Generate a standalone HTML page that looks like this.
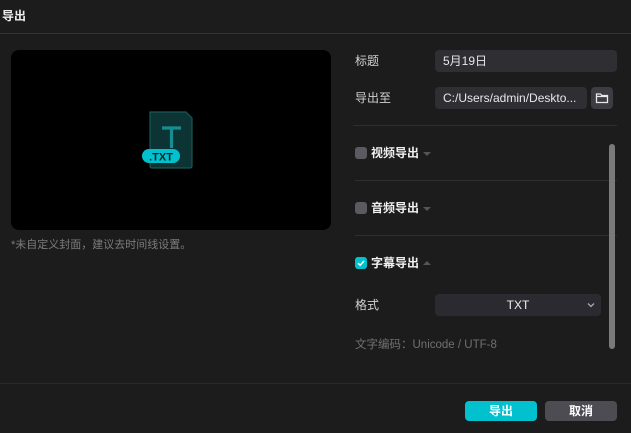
<!DOCTYPE html>
<html><head><meta charset="utf-8"><style>
*{margin:0;padding:0;box-sizing:border-box}
body{width:631px;height:433px;background:#1c1c1c;font-family:"Liberation Sans","Noto Sans CJK SC",sans-serif;color:#e6e6e6;position:relative;overflow:hidden;font-size:12px}
.a{position:absolute}
.line{position:absolute;height:1px;background:#2e2e2e}
.lbl{position:absolute;font-size:12px;color:#d0d0d0;line-height:16px}
.inp{position:absolute;background:#2e2e33;border-radius:4px;font-size:12px;color:#e8e8e8;line-height:22px;padding-left:8px}
.cb{position:absolute;width:12px;height:12px;border-radius:3px;background:#5a5a60}
.sec{position:absolute;font-size:12px;font-weight:bold;color:#f0f0f0;line-height:16px}
.tri{position:absolute;width:0;height:0;border-left:4px solid transparent;border-right:4px solid transparent}
</style></head><body>
<div class="a" style="left:2px;top:8px;font-size:12px;font-weight:bold;color:#eee;line-height:16px">导出</div>
<div class="line" style="left:0;top:33px;width:631px;background:#333"></div>
<div class="a" style="left:11px;top:50px;width:320px;height:180px;background:#000;border-radius:8px"></div>
<svg class="a" style="left:140px;top:108px" width="56" height="64" viewBox="0 0 56 64">
<path d="M10 4 H46 L52 10 V58 Q52 60 50 60 H12 Q10 60 10 58 Z" fill="#0c3434" stroke="#1c5656" stroke-width="1.2"/>
<path d="M22 20 H41 M31.5 20 V40" stroke="#168d93" stroke-width="3.2" fill="none"/>
<rect x="2" y="41" width="38" height="14" rx="7" fill="#00c1cd"/>
<text x="21" y="52.5" font-family="Liberation Sans" font-weight="bold" font-size="11" fill="#062626" text-anchor="middle">.TXT</text>
</svg>
<div class="a" style="left:11px;top:238px;font-size:11px;color:#7c7c7c;line-height:14px">*未自定义封面，建议去时间线设置。</div>

<div class="lbl" style="left:355px;top:53px">标题</div>
<div class="inp" style="left:435px;top:50px;width:182px;height:22px">5月19日</div>
<div class="lbl" style="left:355px;top:90px">导出至</div>
<div class="inp" style="left:435px;top:87px;width:152px;height:22px">C:/Users/admin/Deskto...</div>
<div class="a" style="left:591px;top:87px;width:22px;height:22px;background:#3c3c42;border-radius:4px"></div>
<svg class="a" style="left:595px;top:91px" width="14" height="14" viewBox="0 0 14 14"><path d="M1.5 3 H5.5 L6.8 4.5 H12.5 V11.5 H1.5 Z M1.5 5.5 H12.5" fill="none" stroke="#e8e8e8" stroke-width="1.3"/></svg>
<div class="line" style="left:353px;top:125px;width:264px"></div>

<div class="cb" style="left:355px;top:147px"></div>
<div class="sec" style="left:371px;top:145px">视频导出</div>
<div class="tri" style="left:423px;top:152px;border-top:4px solid #555"></div>
<div class="line" style="left:355px;top:180px;width:262px"></div>
<div class="cb" style="left:355px;top:202px"></div>
<div class="sec" style="left:371px;top:200px">音频导出</div>
<div class="tri" style="left:423px;top:207px;border-top:4px solid #555"></div>
<div class="line" style="left:355px;top:235px;width:262px"></div>
<div class="cb" style="left:355px;top:257px;background:#00c1cd"></div>
<svg class="a" style="left:355px;top:257px" width="12" height="12" viewBox="0 0 12 12"><path d="M3 6.2 L5.2 8.2 L9 4" fill="none" stroke="#fff" stroke-width="1.5"/></svg>
<div class="sec" style="left:371px;top:255px">字幕导出</div>
<div class="tri" style="left:423px;top:261px;border-bottom:4px solid #555"></div>

<div class="lbl" style="left:355px;top:297px">格式</div>
<div class="a" style="left:435px;top:294px;width:166px;height:22px;background:#2a2a30;border-radius:4px;text-align:center;line-height:22px;font-size:12px;color:#eee">TXT</div>
<svg class="a" style="left:587px;top:302px" width="8" height="6" viewBox="0 0 8 6"><path d="M1 1.5 L4 4.5 L7 1.5" fill="none" stroke="#aaa" stroke-width="1.3"/></svg>
<div class="a" style="left:355px;top:337px;font-size:11.5px;color:#707070;line-height:16px">文字编码：Unicode / UTF-8</div>
<div class="a" style="left:609px;top:144px;width:6px;height:205px;background:#7a7a7a;border-radius:3px"></div>

<div class="line" style="left:0;top:383px;width:631px;background:#2a2a2a"></div>
<div class="a" style="left:465px;top:401px;width:72px;height:20px;background:#00c1cd;border-radius:4px;text-align:center;line-height:20px;font-weight:bold;color:#fff;font-size:12px">导出</div>
<div class="a" style="left:545px;top:401px;width:72px;height:20px;background:#4c4c52;border-radius:4px;text-align:center;line-height:20px;font-weight:bold;color:#fff;font-size:12px">取消</div>
</body></html>
